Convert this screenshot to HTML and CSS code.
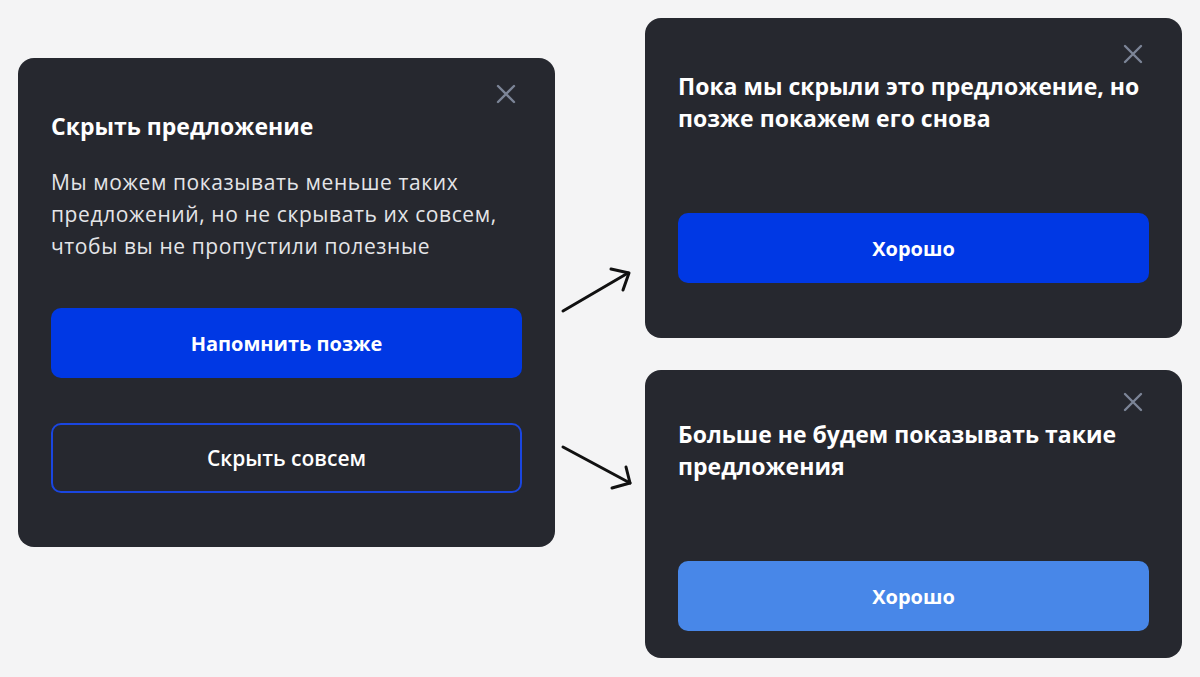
FILE: index.html
```html
<!DOCTYPE html>
<html lang="ru">
<head>
    <meta charset="UTF-8">
    <meta name="viewport" content="width=device-width, initial-scale=1.0">
    <title>Скрыть предложение</title>
    <link rel="stylesheet" href="styles.css">
</head>
<body>

    <main class="flow">

        <!-- Первый шаг: выбор -->
        <section class="sheet sheet--ask">
            <button class="sheet__close" aria-label="Закрыть">
                <svg viewBox="0 0 20 20" width="20" height="20"><path d="M2 2L18 18M18 2L2 18"/></svg>
            </button>
            <h2 class="sheet__title">Скрыть предложение</h2>
            <p class="sheet__text">Мы можем показывать меньше таких<br>предложений, но не скрывать их совсем,<br>чтобы вы не пропустили полезные</p>
            <div class="sheet__actions">
                <button class="btn btn--primary">Напомнить позже</button>
                <button class="btn btn--outline">Скрыть совсем</button>
            </div>
        </section>

        <!-- Стрелки к результатам -->
        <div class="arrows">
            <svg viewBox="0 0 90 640" width="90" height="640">
                <path d="M8 293L73 255"/>
                <path d="M56 251L74 255L68 272"/>
                <path d="M8 429L75 465"/>
                <path d="M71 449L75 465L57 470"/>
            </svg>
        </div>

        <!-- Результаты -->
        <div class="results">
            <section class="sheet sheet--result">
                <button class="sheet__close" aria-label="Закрыть">
                    <svg viewBox="0 0 20 20" width="20" height="20"><path d="M2 2L18 18M18 2L2 18"/></svg>
                </button>
                <h2 class="sheet__title">Пока мы скрыли это предложение, но<br>позже покажем его снова</h2>
                <button class="btn btn--primary">Хорошо</button>
            </section>

            <section class="sheet sheet--result sheet--final">
                <button class="sheet__close" aria-label="Закрыть">
                    <svg viewBox="0 0 20 20" width="20" height="20"><path d="M2 2L18 18M18 2L2 18"/></svg>
                </button>
                <h2 class="sheet__title">Больше не будем показывать такие<br>предложения</h2>
                <button class="btn btn--light">Хорошо</button>
            </section>
        </div>

    </main>

</body>
</html>
```

FILE: styles.css
```css
/* Общий фон */
body {
    margin: 0;
    padding: 18px;
    background: #f4f4f5;
    font-family: "Open Sans", "Noto Sans", sans-serif;
    color: #fff;
}
.flow {
    display: flex;
    align-items: flex-start;
}

/* Карточка */
.sheet {
    position: relative;
    box-sizing: border-box;
    width: 537px;
    background: #26282f;
    border-radius: 16px;
    padding: 52px 33px 54px;
}
.sheet--ask {
    margin-top: 40px;
}
.sheet__close {
    position: absolute;
    top: 26px;
    right: 39px;
    width: 20px;
    height: 20px;
    padding: 0;
    border: none;
    background: none;
    cursor: pointer;
}
.sheet__close svg {
    display: block;
    fill: none;
    stroke: #7c8597;
    stroke-width: 2.4;
    stroke-linecap: round;
}
.sheet__title {
    margin: 0;
    font-size: 23px;
    line-height: 32px;
    font-weight: 700;
}
.sheet__text {
    margin: 24px 0 0;
    font-size: 21px;
    line-height: 32px;
    letter-spacing: 0.6px;
    color: #e4e5e8;
}
.sheet__actions {
    display: flex;
    flex-direction: column;
    gap: 45px;
    margin-top: 46px;
}

/* Стрелки */
.arrows {
    width: 90px;
    flex-shrink: 0;
}
.arrows svg {
    display: block;
    fill: none;
    stroke: #111;
    stroke-width: 3;
    stroke-linecap: round;
    stroke-linejoin: round;
}

/* Правая колонка */
.results {
    display: flex;
    flex-direction: column;
    gap: 32px;
}
.sheet--result {
    padding-bottom: 55px;
}
.sheet--result .btn {
    margin-top: 79px;
}
.sheet--final {
    padding-top: 48px;
    padding-bottom: 27px;
}
.sheet--final .sheet__close {
    top: 22px;
}

/* Кнопки */
.btn {
    display: block;
    box-sizing: border-box;
    width: 100%;
    height: 70px;
    border: none;
    border-radius: 10px;
    font-family: inherit;
    font-size: 20px;
    font-weight: 700;
    color: #fff;
    cursor: pointer;
}
.btn--primary {
    background: #0038e4;
}
.btn--light {
    background: #4887e8;
}
.btn--outline {
    background: transparent;
    border: 2px solid #1a46e0;
    font-size: 21px;
    font-weight: 600;
}
```
